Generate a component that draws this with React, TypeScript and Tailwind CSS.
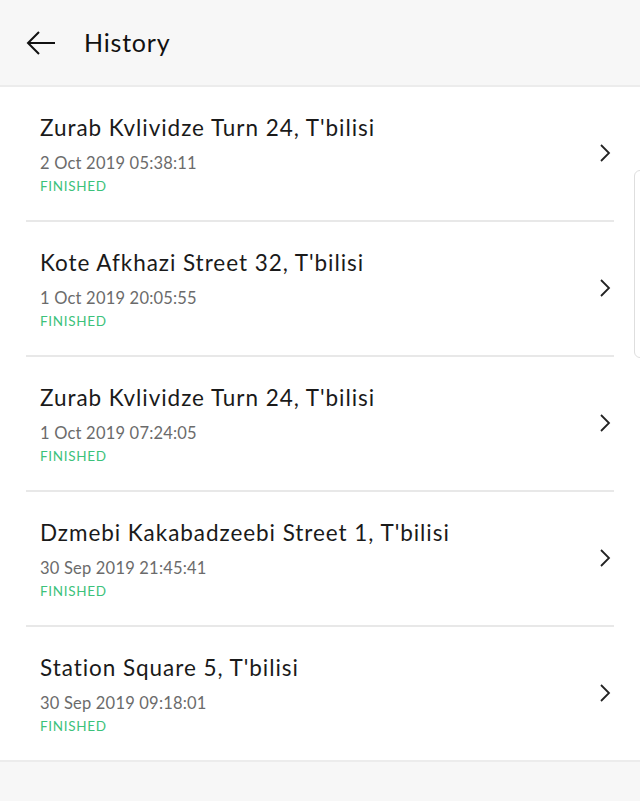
const items = [
  { address: "Zurab Kvlividze Turn 24, T'bilisi", date: '2 Oct 2019 05:38:11' },
  { address: "Kote Afkhazi Street 32, T'bilisi", date: '1 Oct 2019 20:05:55' },
  { address: "Zurab Kvlividze Turn 24, T'bilisi", date: '1 Oct 2019 07:24:05' },
  { address: "Dzmebi Kakabadzeebi Street 1, T'bilisi", date: '30 Sep 2019 21:45:41' },
  { address: "Station Square 5, T'bilisi", date: '30 Sep 2019 09:18:01' },
];

function Chevron() {
  return (
    <svg className="h-[20px] w-[14px] text-[#222]" viewBox="0 0 14 20" fill="none" stroke="currentColor" strokeWidth={1.8}>
      <path d="M3 2l8 8-8 8" strokeLinejoin="miter" />
    </svg>
  );
}

export default function App() {
  return (
    <div className="relative flex h-[801px] w-[640px] flex-col overflow-hidden bg-[#f7f7f7] font-['Lato',sans-serif]">
      <header className="flex h-[87px] shrink-0 items-center border-b-2 border-[#ececec] bg-[#f7f7f7] pl-[26px]">
        <svg className="h-[26px] w-[30px] text-[#111]" viewBox="0 0 30 26" fill="none" stroke="currentColor" strokeWidth={2}>
          <path d="M29 13H2M13 2L2 13l11 11" />
        </svg>
        <h1 className="ml-[28px] text-[25px] leading-none tracking-[0.8px] text-[#111]">History</h1>
      </header>

      <ul className="shrink-0 bg-white">
        {items.map((item, i) => (
          <li key={i} className={`flex pl-[26px] pr-[26px] ${i < items.length - 1 ? 'h-[135px]' : 'h-[133px]'}`}>
            <div className={`flex h-full flex-1 ${i < items.length - 1 ? 'border-b-2 border-[#e8e8e8]' : ''}`}>
              <div className="flex-1 pl-[14px] pt-[27px]">
                <div className="text-[22.5px] leading-[28px] tracking-[0.95px] text-[#1a1a1a]">{item.address}</div>
                <div className="mt-[11px] text-[16.5px] leading-[20px] tracking-[0.2px] text-[#6b6b6b]">{item.date}</div>
                <div className="mt-[4px] text-[13.5px] leading-[18px] tracking-[0.7px] text-[#3cc27b]">FINISHED</div>
              </div>
              <div className="flex items-center pb-[2px] pr-[2px]">
                <Chevron />
              </div>
            </div>
          </li>
        ))}
      </ul>

      <div className="flex-1 border-t-2 border-[#ececec] bg-[#f7f7f7]" />

      <div className="absolute right-[-6px] top-[170px] h-[188px] w-[12px] rounded-[6px] border border-[#dedede] bg-white" />
    </div>
  );
}
